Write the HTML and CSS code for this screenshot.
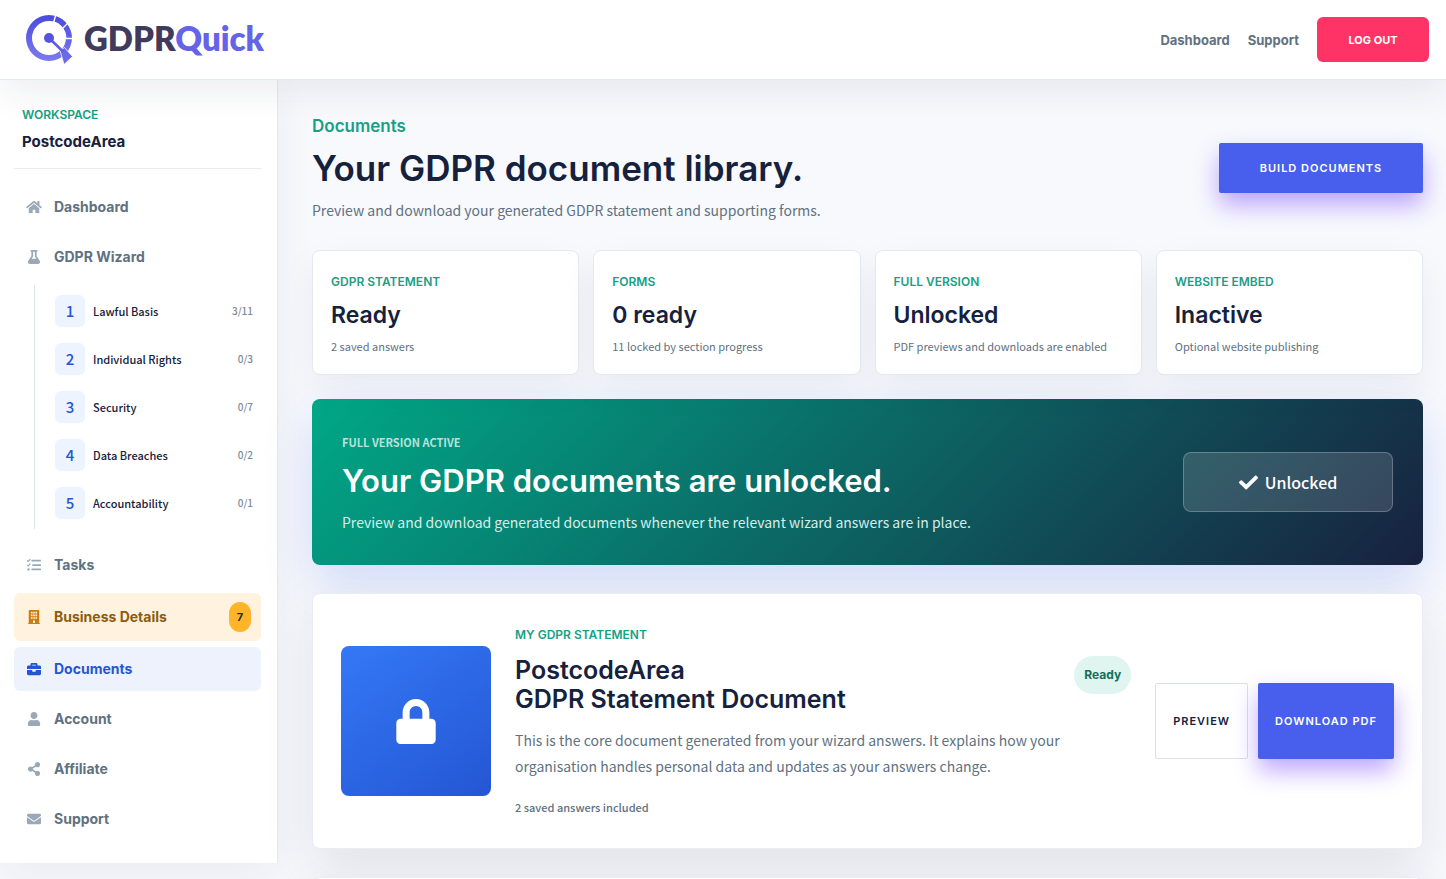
FILE: index.html
```html
<!DOCTYPE html>
<html lang="en">
<head>
<meta charset="utf-8">
<meta name="viewport" content="width=device-width, initial-scale=1">
<title>Documents - GDPRQuick</title>
<link rel="stylesheet" href="styles.css">
</head>
<body>

<header class="topbar">
  <a href="#" class="logo">
    <svg class="logo-mark" viewBox="0 0 48 50" aria-hidden="true">
      <defs>
        <linearGradient id="logoFade" x1="0" y1="0" x2="0" y2="1">
          <stop offset="0" stop-color="#4a4bdc"/>
          <stop offset="1" stop-color="#7c7af0"/>
        </linearGradient>
      </defs>
      <path fill="url(#logoFade)" fill-rule="evenodd" d="M23 0a23 23 0 1 0 0 46a23 23 0 1 0 0-46zM23 6a17 17 0 1 1 0 34a17 17 0 1 1 0-34z"/>
      <path fill="none" stroke="#fff" stroke-width="1" d="M27 6.500A17 17 0 0 1 40 23"/>
      <path stroke="#fff" stroke-width="1.4" d="M27.500 8L30 -1M36 14L43 7M39 23.500H48"/>
      <path fill="#6b69ea" stroke="#fff" stroke-width=".8" d="M34 35.500L38.500 32.500L46.500 41.500L38 49.500z"/>
      <path stroke="#5d5be3" stroke-width="2.500" d="M24 24L37 36.500"/>
      <circle cx="23" cy="23" r="5" fill="#5654df"/>
    </svg>
    <span class="logo-text">GDPR<span class="logo-accent">Quick</span></span>
  </a>
  <nav class="topnav">
    <a href="#">Dashboard</a>
    <a href="#">Support</a>
    <button type="button" class="logout">LOG OUT</button>
  </nav>
</header>

<div class="page">
  <aside class="sidebar">
    <div class="workspace">
      <div class="label">WORKSPACE</div>
      <div class="workspace-name">PostcodeArea</div>
    </div>

    <nav class="menu">
      <a href="#" class="menu-item">
        <svg class="icon" viewBox="0 0 576 512"><path d="M280.370 148.260L96 300.110V464a16 16 0 0 0 16 16l112.060-.290a16 16 0 0 0 15.920-16V368a16 16 0 0 1 16-16h64a16 16 0 0 1 16 16v95.640a16 16 0 0 0 16 16.050L464 480a16 16 0 0 0 16-16V300L295.670 148.260a12.190 12.190 0 0 0-15.300 0zM571.600 251.470L488 182.560V44.050a12 12 0 0 0-12-12h-56a12 12 0 0 0-12 12v72.610L318.470 43a48 48 0 0 0-61 0L4.340 251.470a12 12 0 0 0-1.600 16.900l25.500 31A12 12 0 0 0 45.150 301l235.220-193.740a12.190 12.190 0 0 1 15.300 0L530.900 301a12 12 0 0 0 16.900-1.600l25.500-31a12 12 0 0 0-1.700-16.930z"/></svg>
        <span>Dashboard</span>
      </a>
      <a href="#" class="menu-item">
        <svg class="icon" viewBox="0 0 448 512"><path d="M437.200 403.500L320 215V64h8c13.300 0 24-10.700 24-24V24c0-13.300-10.700-24-24-24H120c-13.300 0-24 10.700-24 24v16c0 13.300 10.700 24 24 24h8v151L10.800 403.500C-18.500 450.600 15.300 512 70.900 512h306.200c55.700 0 89.400-61.500 60.100-108.500zM137.900 320l48.200-77.600c3.700-5.200 5.800-11.600 5.800-18.400V64h64v160c0 6.900 2.200 13.200 5.800 18.400l48.200 77.600h-172z"/></svg>
        <span>GDPR Wizard</span>
      </a>
      <div class="steps">
        <a href="#" class="step"><b>1</b><span>Lawful Basis</span><small>3/11</small></a>
        <a href="#" class="step"><b>2</b><span>Individual Rights</span><small>0/3</small></a>
        <a href="#" class="step"><b>3</b><span>Security</span><small>0/7</small></a>
        <a href="#" class="step"><b>4</b><span>Data Breaches</span><small>0/2</small></a>
        <a href="#" class="step"><b>5</b><span>Accountability</span><small>0/1</small></a>
      </div>
      <a href="#" class="menu-item">
        <svg class="icon" viewBox="0 0 512 512"><path d="M176 64h320q16 0 16 16v32q0 16-16 16H176q-16 0-16-16V80q0-16 16-16zM208 224h288q16 0 16 16v32q0 16-16 16H208q-16 0-16-16v-32q0-16 16-16zM176 384h320q16 0 16 16v32q0 16-16 16H176q-16 0-16-16v-32q0-16 16-16z"/><circle cx="56" cy="416" r="44"/><path fill="none" stroke="currentColor" stroke-width="44" d="M8 84l38 38 78-84M8 250l38 38 78-84"/></svg>
        <span>Tasks</span>
      </a>
      <a href="#" class="menu-item warn">
        <svg class="icon" viewBox="0 0 448 512"><path fill-rule="evenodd" d="M436 480h-20V24c0-13.300-10.700-24-24-24H56C42.700 0 32 10.700 32 24v456H12c-6.600 0-12 5.400-12 12v20h448v-20c0-6.600-5.400-12-12-12zM112 64h60v60h-60zM276 64h60v60h-60zM194 64h60v60h-60zM112 164h60v60h-60zM194 164h60v60h-60zM276 164h60v60h-60zM112 264h60v60h-60zM276 264h60v60h-60zM194 264h60v60h-60zM188 384h72v90h-72z"/></svg>
        <span>Business Details</span>
        <span class="count">7</span>
      </a>
      <a href="#" class="menu-item active">
        <svg class="icon" viewBox="0 0 512 512"><path d="M320 336c0 8.840-7.160 16-16 16h-96c-8.840 0-16-7.160-16-16v-48H0v144c0 25.600 22.400 48 48 48h416c25.600 0 48-22.400 48-48V288H320v48zm144-208h-80V80c0-25.600-22.400-48-48-48H176c-25.600 0-48 22.400-48 48v48H48c-25.600 0-48 22.400-48 48v80h512v-80c0-25.600-22.400-48-48-48zm-144 0H192V96h128v32z"/></svg>
        <span>Documents</span>
      </a>
      <a href="#" class="menu-item">
        <svg class="icon" viewBox="0 0 448 512"><path d="M224 256c70.700 0 128-57.300 128-128S294.700 0 224 0 96 57.300 96 128s57.300 128 128 128zm89.600 32h-16.700c-22.200 10.200-46.900 16-72.900 16s-50.600-5.800-72.900-16h-16.700C60.200 288 0 348.200 0 422.400V464c0 26.500 21.500 48 48 48h352c26.500 0 48-21.500 48-48v-41.600c0-74.200-60.200-134.400-134.400-134.400z"/></svg>
        <span>Account</span>
      </a>
      <a href="#" class="menu-item">
        <svg class="icon" viewBox="0 0 448 512"><path d="M352 320c-22.608 0-43.387 7.819-59.790 20.895l-102.486-64.054a96.551 96.551 0 0 0 0-41.683l102.486-64.054C308.613 184.181 329.392 192 352 192c53.019 0 96-42.981 96-96S405.019 0 352 0s-96 42.981-96 96c0 7.158.790 14.130 2.276 20.841L155.790 180.895C139.387 167.819 118.608 160 96 160c-53.019 0-96 42.981-96 96s42.981 96 96 96c22.608 0 43.387-7.819 59.790-20.895l102.486 64.054A96.301 96.301 0 0 0 256 416c0 53.019 42.981 96 96 96s96-42.981 96-96-42.981-96-96-96z"/></svg>
        <span>Affiliate</span>
      </a>
      <a href="#" class="menu-item">
        <svg class="icon" viewBox="0 0 512 512"><path d="M502.300 190.800c3.900-3.100 9.700-.2 9.700 4.700V400c0 26.500-21.500 48-48 48H48c-26.500 0-48-21.500-48-48V195.600c0-5 5.700-7.800 9.700-4.700 22.400 17.400 52.100 39.500 154.100 113.600 21.100 15.400 56.700 47.800 92.200 47.600 35.700.3 72-32.800 92.300-47.600 102-74.100 131.600-96.300 154-113.700zM256 320c23.200.4 56.600-29.200 73.400-41.400 132.700-96.300 142.800-104.700 173.400-128.700 5.800-4.500 9.200-11.500 9.200-18.900v-19c0-26.500-21.500-48-48-48H48c-26.500 0-48 21.500-48 48v19c0 7.400 3.400 14.300 9.200 18.900 30.600 23.900 40.700 32.400 173.400 128.700 16.800 12.200 50.200 41.800 73.400 41.400z"/></svg>
        <span>Support</span>
      </a>
    </nav>
  </aside>

  <main class="content">
    <div class="page-head">
      <div>
        <div class="eyebrow">Documents</div>
        <h1>Your GDPR document library.</h1>
        <p>Preview and download your generated GDPR statement and supporting forms.</p>
      </div>
      <button type="button" class="btn btn-primary btn-build">BUILD DOCUMENTS</button>
    </div>

    <section class="stats">
      <div class="stat">
        <div class="label">GDPR STATEMENT</div>
        <strong>Ready</strong>
        <p>2 saved answers</p>
      </div>
      <div class="stat">
        <div class="label">FORMS</div>
        <strong>0 ready</strong>
        <p>11 locked by section progress</p>
      </div>
      <div class="stat">
        <div class="label">FULL VERSION</div>
        <strong>Unlocked</strong>
        <p>PDF previews and downloads are enabled</p>
      </div>
      <div class="stat">
        <div class="label">WEBSITE EMBED</div>
        <strong>Inactive</strong>
        <p>Optional website publishing</p>
      </div>
    </section>

    <section class="banner">
      <div>
        <div class="banner-label">FULL VERSION ACTIVE</div>
        <h2>Your GDPR documents are unlocked.</h2>
        <p>Preview and download generated documents whenever the relevant wizard answers are in place.</p>
      </div>
      <div class="unlocked">
        <svg viewBox="0 0 512 512" aria-hidden="true"><path d="M173.898 439.404l-166.400-166.400c-9.997-9.997-9.997-26.206 0-36.204l36.203-36.204c9.997-9.998 26.207-9.998 36.204 0L192 312.690 432.095 72.596c9.997-9.997 26.207-9.997 36.204 0l36.203 36.204c9.997 9.997 9.997 26.206 0 36.204l-294.400 294.401c-9.998 9.997-26.207 9.997-36.204-.001z"/></svg>
        <span>Unlocked</span>
      </div>
    </section>

    <section class="doc">
      <div class="doc-cover">
        <svg viewBox="0 0 448 512" aria-hidden="true"><path d="M400 224h-24v-72C376 68.200 307.800 0 224 0S72 68.200 72 152v72H48c-26.500 0-48 21.500-48 48v192c0 26.500 21.500 48 48 48h352c26.500 0 48-21.500 48-48V272c0-26.500-21.500-48-48-48zm-104 0H152v-72c0-39.700 32.300-72 72-72s72 32.300 72 72v72z"/></svg>
      </div>
      <div class="doc-info">
        <div class="label">MY GDPR STATEMENT</div>
        <div class="doc-title">
          <h2>PostcodeArea<br>GDPR Statement Document</h2>
          <span class="status">Ready</span>
        </div>
        <p>This is the core document generated from your wizard answers. It explains how your organisation handles personal data and updates as your answers change.</p>
        <div class="doc-meta">2 saved answers included</div>
      </div>
      <div class="doc-actions">
        <button type="button" class="btn btn-outline">PREVIEW</button>
        <button type="button" class="btn btn-primary">DOWNLOAD PDF</button>
      </div>
    </section>

    <section class="doc doc-next"></section>
  </main>
</div>

</body>
</html>
```
FILE: styles.css
```css
* {
  box-sizing: border-box;
}
body {
  margin: 0;
  height: 100vh;
  overflow: hidden;
  background: #f8f9fd;
  color: #60717f;
  font-family: "Noto Sans CJK SC", "Open Sans", sans-serif;
  font-size: 14px;
  line-height: 26px;
}
h1, h2, p {
  margin: 0;
}
h1, h2 {
  color: #15213d;
  font-weight: 600;
}
a {
  color: inherit;
  text-decoration: none;
}
button {
  cursor: pointer;
}
h1, h2, strong, .topnav, .menu-item, .workspace, .label, .eyebrow, .status, .btn, .logout {
  font-family: Inter, "Open Sans", sans-serif;
}

/* top bar */
.topbar {
  position: relative;
  z-index: 2;
  display: flex;
  align-items: center;
  justify-content: space-between;
  height: 80px;
  padding: 0 17px 0 26px;
  background: #fff;
  border-bottom: 1px solid #e4e9ee;
  box-shadow: 0 12px 36px rgba(24, 33, 63, 0.08);
}
.logo {
  display: flex;
  align-items: center;
  gap: 10px;
}
.logo-mark {
  width: 48px;
  height: 50px;
}
.logo-text {
  padding-bottom: 4px;
  color: #403a5c;
  font-family: Lato, sans-serif;
  font-size: 33px;
  font-weight: 800;
  line-height: 40px;
}
.logo-accent {
  color: #6563e8;
}
.topnav {
  display: flex;
  align-items: center;
  gap: 18px;
  font-size: 13px;
  font-weight: 700;
  line-height: 24px;
}
.logout {
  width: 112px;
  height: 45px;
  border: 0;
  border-radius: 6px;
  background: #ff3366;
  color: #fff;
  font-size: 11px;
  font-weight: 700;
}

/* sidebar */
.page {
  display: flex;
  align-items: flex-start;
}
.sidebar {
  flex: 0 0 278px;
  padding: 22px 16px 22px 14px;
  background: #fff;
  border-right: 1px solid #e4e9ee;
  box-shadow: 0 16px 40px rgba(24, 33, 63, 0.06);
}
.label {
  color: #16a085;
  font-size: 12px;
  font-weight: 600;
}
.workspace {
  padding: 0 8px 12px;
  border-bottom: 1px solid #e9edf1;
}
.workspace-name {
  color: #15213d;
  font-size: 15px;
  font-weight: 700;
  line-height: 28px;
}
.menu {
  display: flex;
  flex-direction: column;
  gap: 6px;
  padding-top: 16px;
}
.menu-item {
  display: flex;
  align-items: center;
  gap: 12px;
  min-height: 44px;
  padding: 0 10px 0 12px;
  border-radius: 6px;
  font-size: 14px;
  font-weight: 700;
}
.icon {
  width: 16px;
  height: 14px;
  color: #9aa9b7;
  fill: currentColor;
}
.menu-item.warn {
  min-height: 48px;
  background: #fff3df;
  color: #8f5b0c;
}
.menu-item.warn .icon {
  color: #c97e12;
}
.menu-item.active {
  background: #edf2fd;
  color: #2456d3;
}
.menu-item.active .icon {
  color: #2456d3;
}
.count {
  width: 22px;
  margin-left: auto;
  border-radius: 15px;
  background: #ffb42a;
  color: #2a2a2a;
  font-size: 11px;
  line-height: 30px;
  text-align: center;
}
.steps {
  margin: 0 0 8px 20px;
  padding: 2px 8px 2px 20px;
  border-left: 1px solid #dfe6ec;
}
.step {
  display: flex;
  align-items: center;
  gap: 8px;
  height: 48px;
  color: #15213d;
  font-size: 11px;
  font-weight: 500;
}
.step b {
  width: 30px;
  border-radius: 6px;
  background: #edf3ff;
  color: #2456d3;
  font-size: 15px;
  font-weight: 500;
  line-height: 32px;
  text-align: center;
}
.step small {
  margin-left: auto;
  color: #7c8b99;
  font-size: 10px;
}

/* main column */
.content {
  flex: 1;
  min-width: 0;
  padding: 33px 23px 33px 34px;
}
.page-head {
  display: flex;
  align-items: center;
  justify-content: space-between;
  gap: 24px;
  margin-bottom: 27px;
}
.eyebrow {
  color: #16a085;
  font-size: 17px;
  font-weight: 600;
}
h1 {
  margin: 8px 0;
  font-size: 35px;
  line-height: 42px;
}
.btn {
  border: 0;
  border-radius: 2px;
  font-size: 11px;
  font-weight: 600;
  letter-spacing: 1px;
}
.btn-primary {
  background: #485fed;
  color: #fff;
  box-shadow: 0 12px 24px rgba(110, 60, 255, 0.45);
}
.btn-build {
  flex: none;
  width: 204px;
  height: 50px;
}
.btn-outline {
  background: #fff;
  border: 1px solid #dce1e6;
  color: #15213d;
}
.stats {
  display: grid;
  grid-template-columns: repeat(4, 1fr);
  gap: 14px;
  margin-bottom: 24px;
}
.stat {
  padding: 18px;
  background: #fff;
  border: 1px solid #e4e9f0;
  border-radius: 8px;
  box-shadow: 0 14px 36px rgba(24, 33, 63, 0.06);
}
.stat strong {
  display: block;
  margin: 6px 0 7px;
  color: #15213d;
  font-size: 23px;
  font-weight: 600;
  line-height: 28px;
}
.stat p {
  font-size: 11px;
  line-height: 20px;
}

.banner {
  display: flex;
  align-items: center;
  justify-content: space-between;
  gap: 24px;
  margin-bottom: 28px;
  padding: 30px;
  border-radius: 8px;
  background: linear-gradient(135deg, #00a887, #18213f);
  box-shadow: 0 18px 50px rgba(50, 95, 230, 0.2);
  color: #d5eeea;
}
.banner-label {
  color: #b5e3d9;
  font-size: 11px;
  font-weight: 700;
}
.banner h2 {
  margin: 8px 0 10px;
  color: #fff;
  font-size: 31px;
  line-height: 36px;
}
.unlocked {
  display: flex;
  flex: none;
  align-items: center;
  justify-content: center;
  gap: 7px;
  width: 210px;
  height: 60px;
  border: 1px solid rgba(255, 255, 255, 0.24);
  border-radius: 8px;
  background: rgba(255, 255, 255, 0.14);
  color: #fff;
  font-size: 16px;
  font-weight: 500;
}
.unlocked svg {
  width: 19px;
  height: 19px;
  fill: #fff;
}

.doc {
  display: flex;
  align-items: center;
  gap: 24px;
  margin-bottom: 28px;
  padding: 28px;
  background: #fff;
  border: 1px solid #e9edf3;
  border-radius: 8px;
  box-shadow: 0 18px 50px rgba(24, 33, 63, 0.1);
}
.doc-next {
  min-height: 255px;
}
.doc-cover {
  display: flex;
  flex: none;
  align-items: center;
  justify-content: center;
  width: 150px;
  height: 150px;
  border-radius: 8px;
  background: linear-gradient(145deg, #3478f6, #2456d3);
}
.doc-cover svg {
  width: 40px;
  height: 45px;
  fill: #fff;
}
.doc-info {
  flex: 1;
}
.doc-title {
  display: flex;
  align-items: flex-start;
  justify-content: space-between;
  margin: 8px 0 13px;
}
.doc-title h2 {
  font-size: 25px;
  line-height: 29px;
}
.status {
  padding: 6px 10px;
  border-radius: 19px;
  background: #e0f5f0;
  color: #10705c;
  font-size: 12px;
  font-weight: 700;
}
.doc-meta {
  margin-top: 15px;
  font-size: 11px;
  font-weight: 500;
}
.doc-actions {
  display: flex;
  gap: 10px;
}
.doc-actions .btn {
  height: 76px;
  padding: 0 17px;
}

@media (max-width: 1100px) {
  .stats {
    grid-template-columns: repeat(2, 1fr);
  }
  .doc, .banner {
    flex-wrap: wrap;
  }
}
```
